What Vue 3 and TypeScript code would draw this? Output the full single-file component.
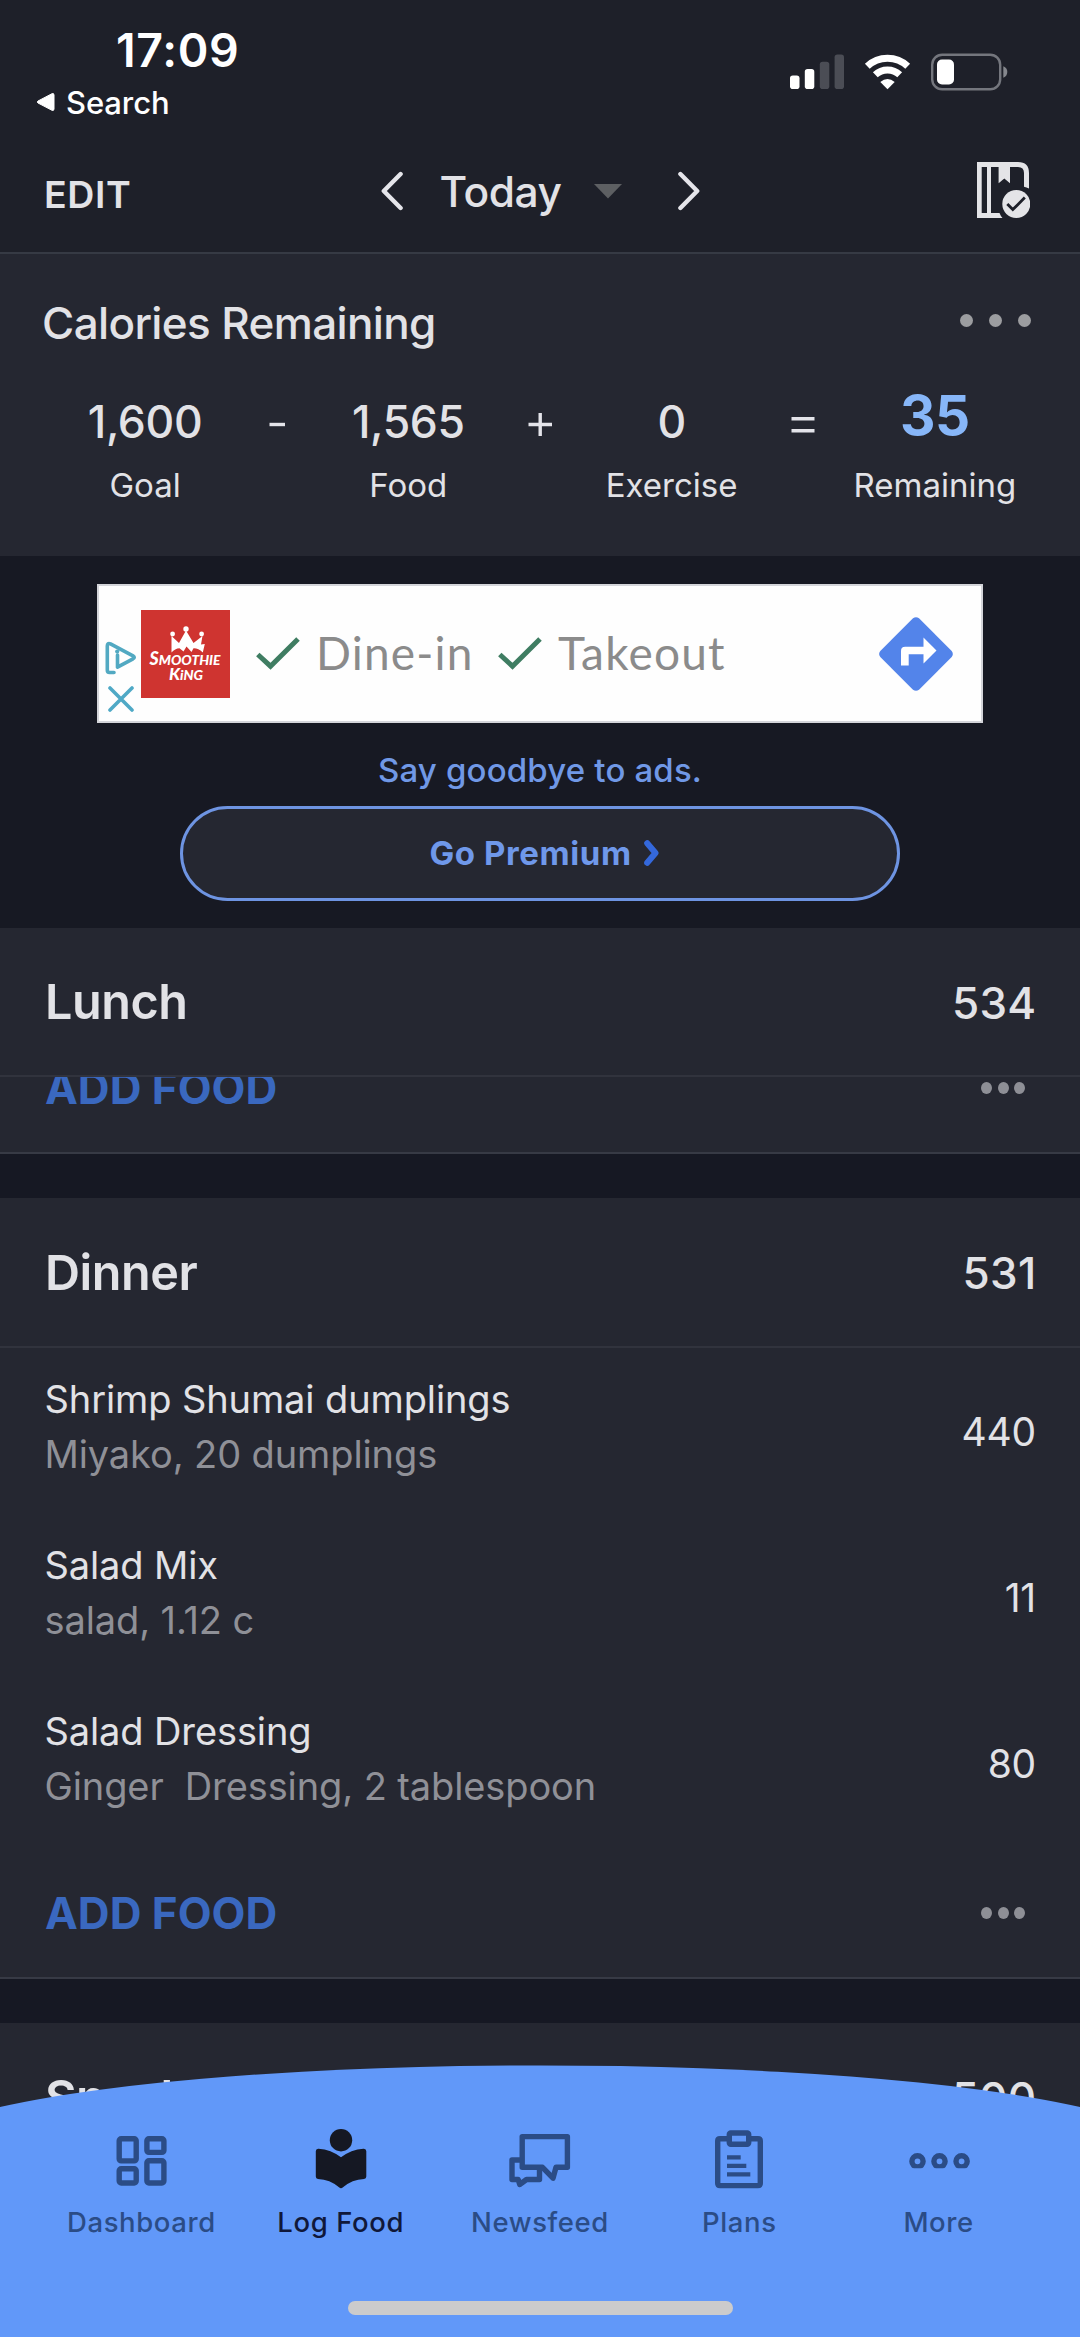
<script setup lang="ts">
interface Total {
  value: string
  label: string
  op?: string
  accent?: boolean
}

interface Food {
  name: string
  detail: string
  calories: number
}

interface Tab {
  id: string
  label: string
  active?: boolean
}

const totals: Total[] = [
  { value: '1,600', label: 'Goal', op: '-' },
  { value: '1,565', label: 'Food', op: '+' },
  { value: '0', label: 'Exercise', op: '=' },
  { value: '35', label: 'Remaining', accent: true },
]

const dinner: Food[] = [
  { name: 'Shrimp Shumai dumplings', detail: 'Miyako, 20 dumplings', calories: 440 },
  { name: 'Salad Mix', detail: 'salad, 1.12 c', calories: 11 },
  { name: 'Salad Dressing', detail: 'Ginger  Dressing, 2 tablespoon', calories: 80 },
]

const tabs: Tab[] = [
  { id: 'dashboard', label: 'Dashboard' },
  { id: 'log', label: 'Log Food', active: true },
  { id: 'newsfeed', label: 'Newsfeed' },
  { id: 'plans', label: 'Plans' },
  { id: 'more', label: 'More' },
]
</script>

<template>
  <div class="screen">
    <div class="status">
      <div class="status-left">
        <div class="time">17:09</div>
        <div class="back">
          <svg width="19" height="20" viewBox="0 0 19 20"><path d="M2 9 16 1.7Q18 1 18 3V17Q18 19 16 18.3L2 11Q.6 10 2 9Z" fill="#fff" stroke="#fff" stroke-width="1" /></svg>
          <span>Search</span>
        </div>
      </div>
      <div class="status-icons">
        <svg width="54" height="36" viewBox="0 0 54 36">
          <rect x="0" y="21.5" width="9.5" height="13.5" rx="2.8" fill="#fff" />
          <rect x="14.8" y="15" width="9.5" height="20" rx="2.8" fill="#fff" />
          <rect x="29.8" y="7.7" width="9.5" height="27.3" rx="2.8" fill="#4b4d55" />
          <rect x="44.6" y="0.5" width="9.4" height="34.5" rx="2.8" fill="#4b4d55" />
        </svg>
        <svg class="wifi" width="48" height="36" viewBox="0 0 48 36">
          <g fill="none" stroke="#fff" stroke-width="7">
            <path d="M3.3 12.3A29.5 29.5 0 0 1 43.7 12.3" />
            <path d="M11.3 20.7A17.9 17.9 0 0 1 35.7 20.7" />
          </g>
          <path d="M23.5 35.2 16.3 28Q23.5 21.8 30.7 28Z" fill="#fff" />
        </svg>
        <svg class="battery" width="78" height="38" viewBox="0 0 78 38">
          <rect x="1.2" y="1.7" width="68" height="34.6" rx="10" fill="none" stroke="#74767d" stroke-width="2.4" />
          <rect x="6" y="6.5" width="17" height="25" rx="5" fill="#fff" />
          <path d="M72.3 13.3Q76.3 15 76.3 19T72.3 24.7Z" fill="#85878d" />
        </svg>
      </div>
    </div>

    <header class="topbar">
      <span class="edit">EDIT</span>
      <div class="day">
        <svg width="22" height="40" viewBox="0 0 22 40"><path d="M19.6 3 2.8 20 19.6 37" fill="none" stroke="#e5e5ea" stroke-width="4.4" stroke-linecap="round" stroke-linejoin="round" /></svg>
        <span class="today">Today</span>
        <svg class="caret" width="28" height="15" viewBox="0 0 28 15"><path d="M0 0H28L14 14.5Z" fill="#5d5f62" /></svg>
        <svg width="22" height="40" viewBox="0 0 22 40"><path d="M2.4 3 19.2 20 2.4 37" fill="none" stroke="#e5e5ea" stroke-width="4.4" stroke-linecap="round" stroke-linejoin="round" /></svg>
      </div>
      <svg class="book" width="53" height="56" viewBox="0 0 53 56">
        <path d="M0 0H41Q52 0 52 11V26.5Q49.5 25.2 47 24.8V11Q47 5 41 5H33V21.3L27.3 16.5 21.6 21.3V5H14V51H22.5Q23.5 53.8 25.5 56H0ZM4.7 5V51H10V5Z" fill="#e4e4e7" fill-rule="evenodd" />
        <circle cx="39.3" cy="42" r="14" fill="#e4e4e7" />
        <path d="M30.3 42 35.8 47.6 47.8 35.6" fill="none" stroke="#1e2029" stroke-width="2.8" />
      </svg>
    </header>

    <section class="summary">
      <div class="summary-head">
        <h1>Calories Remaining</h1>
        <div class="dots wide"><i /><i /><i /></div>
      </div>
      <div class="totals">
        <template v-for="t in totals" :key="t.label">
          <div class="total">
            <div class="num" :class="{ accent: t.accent }">{{ t.value }}</div>
            <div class="cap">{{ t.label }}</div>
          </div>
          <div v-if="t.op" class="op">
            <svg width="26" height="28" viewBox="0 0 26 28" stroke="#e4e4ea" stroke-width="3.4">
              <path v-if="t.op === '-'" d="M5.5 15.5H21" />
              <path v-else-if="t.op === '+'" d="M1.5 15.5H25M13.2 4V27" />
              <path v-else d="M1.5 9.7H24.5M1.5 21.7H24.5" />
            </svg>
          </div>
        </template>
      </div>
    </section>

    <section class="promo">
      <div class="banner">
        <div class="choices">
          <svg width="32" height="34" viewBox="0 0 32 34">
            <path d="M9 31.5H4.5Q2.3 31.5 2.3 29V5Q2.3 1.5 5.5 2.8L28 14.8Q30.5 16.3 28 17.8L12.5 26.2V14" fill="none" stroke="#52a9c2" stroke-width="3.6" stroke-linejoin="round" stroke-linecap="round" />
            <circle cx="12.2" cy="10.6" r="2.1" fill="#52a9c2" />
          </svg>
          <svg width="26" height="26" viewBox="0 0 26 26"><path d="M2 2 24 24M24 2 2 24" stroke="#4fa9c6" stroke-width="3.6" stroke-linecap="round" /></svg>
        </div>
        <svg class="logo" width="89" height="88" viewBox="0 0 89 88">
          <rect width="89" height="88" fill="#cf3430" />
          <g fill="#fff">
            <circle cx="31.6" cy="24" r="2.4" /><circle cx="45" cy="19" r="2.7" /><circle cx="60.6" cy="24" r="2.4" />
            <path d="M30.5 26 38 33 45 20.5 52.5 33 61.5 26 60 34.5 63.8 34 61.8 42.5Q57 38 52.5 38.3L50.5 42 45.5 36.5 42.5 41.5 38.5 38.3Q34 38.5 30.5 42.5Z" />
            <text x="8.5" y="54.5" textLength="71" lengthAdjust="spacingAndGlyphs"><tspan font-size="18">S</tspan><tspan font-size="14">MOOTHIE</tspan></text>
            <text x="28" y="70" textLength="34" lengthAdjust="spacingAndGlyphs"><tspan font-size="17">K</tspan><tspan font-size="14">iNG</tspan></text>
          </g>
        </svg>
        <svg class="tick" width="44" height="33" viewBox="0 0 44 33"><path d="M1.8 17.5 14.5 29.2 42 2" fill="none" stroke="#3f7d62" stroke-width="5" /></svg>
        <span class="perk first">Dine-in</span>
        <svg class="tick second" width="44" height="33" viewBox="0 0 44 33"><path d="M1.8 17.5 14.5 29.2 42 2" fill="none" stroke="#3f7d62" stroke-width="5" /></svg>
        <span class="perk">Takeout</span>
        <svg class="route" width="74" height="74" viewBox="0 0 74 74">
          <path d="M34 1.3Q37 -1 40 1.3L72.7 34Q75 37 72.7 40L40 72.7Q37 75 34 72.7L1.3 40Q-1 37 1.3 34Z" fill="#5384ea" />
          <path d="M22 48.5V34Q22 29.8 26.2 29.8H44.5V20.5L57.5 33.5 44.5 46.5V37.3H29.7V48.5Z" fill="#fff" />
        </svg>
      </div>
      <p class="bye">Say goodbye to ads.</p>
      <div class="premium">
        <span>Go Premium</span>
        <svg width="15" height="26" viewBox="0 0 15 26"><path d="M3.2 3.2 11.5 13 3.2 22.8" fill="none" stroke="#3468db" stroke-width="6" stroke-linecap="round" stroke-linejoin="round" /></svg>
      </div>
    </section>

    <section class="meal">
      <div class="meal-head"><h2>Lunch</h2><span>534</span></div>
      <div class="add clipped"><span>ADD FOOD</span><div class="dots"><i /><i /><i /></div></div>
    </section>

    <section class="meal">
      <div class="meal-head tall"><h2>Dinner</h2><span class="one">531</span></div>
      <div v-for="f in dinner" :key="f.name" class="food">
        <div class="food-text">
          <div class="name">{{ f.name }}</div>
          <div class="detail">{{ f.detail }}</div>
        </div>
        <span class="kcal">{{ f.calories }}</span>
      </div>
      <div class="add"><span>ADD FOOD</span><div class="dots"><i /><i /><i /></div></div>
    </section>

    <section class="meal">
      <div class="meal-head tall"><h2>Snacks</h2><span>500</span></div>
    </section>

    <nav class="tabbar">
      <svg class="curve" width="1080" height="272" viewBox="0 0 1080 272"><path d="M0 42A628 85 0 0 1 1080 42V272H0Z" fill="#6198f9" /></svg>
      <div class="tabs">
        <div v-for="t in tabs" :key="t.id" class="tab" :class="{ active: t.active }">
          <svg width="66" height="60" viewBox="0 0 66 60" fill="none" stroke="currentColor" stroke-width="5.4" stroke-linejoin="round">
            <template v-if="t.id === 'dashboard'">
              <rect x="11.2" y="9.7" width="17" height="22.2" rx="2" />
              <rect x="11.2" y="39.8" width="17" height="14.2" rx="2" />
              <rect x="38.9" y="9.7" width="17" height="13.7" rx="2" />
              <rect x="38.9" y="31.8" width="17" height="22.2" rx="2" />
            </template>
            <g v-else-if="t.id === 'log'" fill="currentColor" stroke="none">
              <circle cx="33" cy="11.2" r="11.2" />
              <path d="M10.5 19.7Q23 20.5 33 28.3 43 20.5 55.5 19.7 58.3 19.5 58.3 22.2V47.5Q58.3 49.8 56 50 44 50.5 35 58.3 33 60 31 58.3 22 50.5 10 50 7.8 49.8 7.8 47.5V22.2Q7.8 19.5 10.5 19.7Z" />
            </g>
            <template v-else-if="t.id === 'newsfeed'">
              <path d="M15.2 31H5V50.5H11.2L12.7 55.5 19.5 50.5H32.5V40" />
              <path d="M15.2 7.6H60.4V38.3H49L46 49.2 35.5 38.3H15.2Z" />
            </template>
            <template v-else-if="t.id === 'plans'">
              <path d="M23.5 9.7H14Q11.7 9.7 11.7 12V54.2Q11.7 56.6 14 56.6H52Q54.3 56.6 54.3 54.2V12Q54.3 9.7 52 9.7H43.5" />
              <rect x="23.3" y="4" width="19.4" height="11.3" rx="1.5" />
              <path d="M21 28.3H34.7M21 36.8H40.3M21 45.3H44.3" stroke-width="4.2" />
            </template>
            <template v-else>
              <clipPath id="more-cut"><rect width="66" height="39.2" /></clipPath>
              <g clip-path="url(#more-cut)">
                <circle cx="11.5" cy="32.3" r="5.6" /><circle cx="33.5" cy="32.3" r="5.6" /><circle cx="55.6" cy="32.3" r="5.6" />
              </g>
            </template>
          </svg>
          <span>{{ t.label }}</span>
        </div>
      </div>
      <div class="home" />
    </nav>
  </div>
</template>

<style>
body { margin: 0; background: #161823; }
</style>

<style scoped>
.screen {
  position: relative;
  width: 1080px;
  height: 2337px;
  overflow: hidden;
  background: #161823;
  color: #e2e2e6;
  font-family: Inter, "Liberation Sans", sans-serif;
  box-sizing: border-box;
}
.screen *, .screen *::before { box-sizing: border-box; }
svg { display: block; flex: none; }
h1, h2, p { margin: 0; }

.status {
  display: flex;
  justify-content: space-between;
  height: 137px;
  background: #1e2029;
  color: #fff;
}
.status-left { padding-top: 20px; }
.time {
  padding-left: 116px;
  font-size: 46.5px;
  font-weight: 600;
  line-height: 60px;
  letter-spacing: 0.65px;
}
.back {
  display: flex;
  align-items: center;
  gap: 11px;
  height: 40px;
  margin-top: 2px;
  padding-left: 36px;
  font-size: 31px;
  font-weight: 500;
  letter-spacing: -0.1px;
}
.status-icons {
  display: flex;
  align-items: center;
  height: 144px;
  padding-right: 71px;
}
.wifi { margin-left: 20px; }
.battery { margin-left: 19px; }

.topbar {
  display: grid;
  grid-template-columns: 1fr auto 1fr;
  align-items: center;
  height: 117px;
  padding: 0 50px 2px 44px;
  background: #1e2029;
  border-bottom: 2px solid #363a44;
}
.edit {
  padding-top: 2px;
  font-size: 37.5px;
  font-weight: 600;
  letter-spacing: 0.6px;
}
.day {
  display: flex;
  align-items: center;
  height: 40px;
  margin: -6px 0 0 6px;
}
.today {
  width: 123px;
  margin: 2px 0 0 37px;
  font-size: 42.5px;
  font-weight: 500;
  letter-spacing: -0.45px;
}
.caret { margin: 2px 56px 0 31px; }
.book { justify-self: end; margin-top: -7px; }

.summary {
  height: 302px;
  padding-top: 29px;
  background: #252731;
}
.summary-head {
  display: flex;
  align-items: center;
  justify-content: space-between;
  height: 80px;
  padding: 0 49px 0 42px;
}
h1 {
  font-size: 44px;
  font-weight: 500;
  letter-spacing: -0.63px;
}
.dots { display: flex; gap: 5.5px; }
.dots i {
  width: 11px;
  height: 12px;
  border-radius: 50%;
  background: #8e8f96;
}
.dots.wide { gap: 16.2px; margin-top: -6px; }
.dots.wide i { width: 13px; height: 13px; background: #9c9da0; }
.totals {
  display: flex;
  justify-content: center;
  margin-top: 34px;
}
.total { width: 175px; text-align: center; }
.op {
  display: flex;
  justify-content: center;
  width: 88.3px;
  padding-top: 12px;
}
.num {
  height: 50px;
  font-size: 44.5px;
  font-weight: 500;
  line-height: 50px;
  letter-spacing: -0.35px;
}
.num.accent {
  color: #87b6f8;
  font-size: 55px;
  font-weight: 700;
  line-height: 36px;
}
.cap {
  height: 36px;
  margin-top: 19.5px;
  font-size: 33px;
  line-height: 36px;
}

.promo {
  display: flex;
  flex-direction: column;
  align-items: center;
  height: 372px;
  padding-top: 28px;
  background: #171923;
}
.banner {
  display: flex;
  align-items: center;
  width: 886px;
  height: 139px;
  padding: 0 28px 0 6px;
  background: #fefefe;
  border: 2px solid #d4d5da;
}
.choices {
  display: flex;
  flex-direction: column;
  align-items: center;
  align-self: flex-start;
  gap: 11px;
  width: 32px;
  padding-top: 55px;
}
.logo {
  margin-left: 4px;
  font-family: Lato, sans-serif;
  font-style: italic;
  font-weight: 900;
}
.tick { margin-left: 26px; }
.perk {
  width: 172px;
  margin-left: 16px;
  margin-top: -3px;
  color: #8b8b8b;
  font-family: Lato, sans-serif;
  font-size: 46px;
  letter-spacing: 1.2px;
  white-space: nowrap;
}
.perk.first { width: 156px; }
.route { margin-left: auto; }
.bye {
  margin-top: 17px;
  color: #7098e6;
  font-size: 33px;
  font-weight: 500;
  line-height: 60px;
  letter-spacing: 0.17px;
}
.premium {
  display: flex;
  align-items: center;
  justify-content: center;
  gap: 12px;
  width: 720px;
  height: 95px;
  margin-top: 5.5px;
  padding-left: 8px;
  color: #6f98ea;
  background: #252731;
  border: 3px solid #6e94e2;
  border-radius: 48px;
  font-size: 33px;
  font-weight: 700;
  letter-spacing: 0.6px;
}

.meal {
  margin-bottom: 44px;
  background: #252731;
}
.meal-head {
  display: flex;
  align-items: center;
  justify-content: space-between;
  height: 149px;
  padding: 0 43.5px 0 45px;
  border-bottom: 2px solid #31333d;
}
.meal-head.tall { height: 150px; }
h2 {
  font-size: 48.5px;
  font-weight: 600;
  letter-spacing: -0.45px;
}
.meal-head span {
  padding-top: 2px;
  font-size: 44px;
  font-weight: 500;
  letter-spacing: 0.3px;
}
.add {
  display: flex;
  align-items: center;
  justify-content: space-between;
  height: 133px;
  padding: 3px 55px 0 45px;
  border-bottom: 2px solid #373a45;
}
.add span {
  color: #3a68bf;
  font-size: 44px;
  font-weight: 700;
}
.add.clipped {
  align-items: flex-start;
  height: 77px;
  padding-top: 0;
  overflow: hidden;
}
.add.clipped span { height: 40px; margin-top: -9px; line-height: 40px; }
.add.clipped .dots { margin-top: 5px; }
.food {
  display: flex;
  align-items: center;
  justify-content: space-between;
  height: 166px;
  padding: 0 44px 0 44.5px;
}
.food-text { padding-bottom: 8px; }
.name, .detail {
  font-size: 38px;
  line-height: 55.5px;
  letter-spacing: -0.11px;
  white-space: pre;
}
.detail { color: #8f9097; }
.kcal { font-size: 39px; letter-spacing: -0.2px; }

.tabbar {
  position: absolute;
  left: 0;
  bottom: 0;
  width: 1080px;
  height: 272px;
}
.curve { position: absolute; inset: 0; }
.tabs {
  position: relative;
  display: flex;
  justify-content: center;
  padding-top: 64px;
}
.tab {
  display: flex;
  flex-direction: column;
  align-items: center;
  width: 199.3px;
  color: #2b4c86;
}
.tab.active { color: #151823; }
.tab span {
  margin-top: 15.5px;
  font-size: 27.5px;
  font-weight: 500;
  line-height: 34px;
  letter-spacing: 0.6px;
}
.tab.active span { color: #10183a; }
.home {
  position: relative;
  width: 385px;
  height: 14px;
  margin: 62.5px auto 0;
  border-radius: 7px;
  background: #cbcbcc;
}
</style>
